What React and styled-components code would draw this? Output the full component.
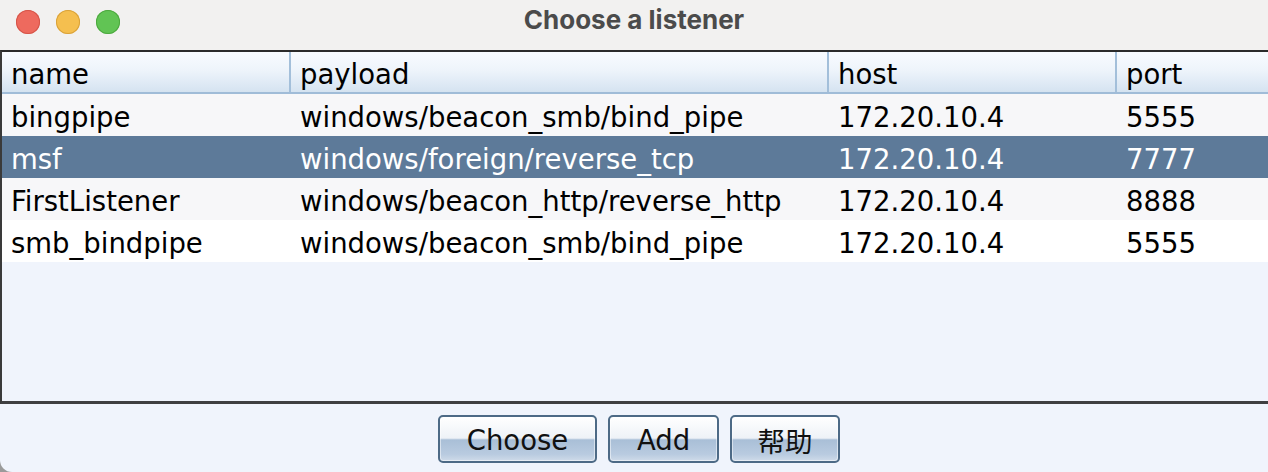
import styled, { createGlobalStyle } from "styled-components";

const Global = createGlobalStyle`
  html, body {
    margin: 0;
    padding: 0;
    background: #9a9a9a;
  }
`

const Window = styled.div`
  width: 1268px;
  height: 472px;
  background: #f0f4fc;
  border-bottom-left-radius: 12px;
  overflow: hidden;
  display: flex;
  flex-direction: column;
  font-family: "DejaVu Sans", "Noto Sans CJK SC", sans-serif;
`
const TitleBar = styled.div`
  height: 50px;
  flex: none;
  background: #f2f1f0;
  display: flex;
  align-items: center;
  position: relative;
`
const Lights = styled.div`
  display: flex;
  gap: 16px;
  padding-left: 16px;
  margin-top: -6px;
`
const Light = styled.span`
  width: 24px;
  height: 24px;
  border-radius: 50%;
  background: ${p => p.$c};
  box-shadow: inset 0 0 0 1px ${p => p.$b};
`
const Title = styled.div`
  position: absolute;
  left: 0;
  right: 0;
  top: 4px;
  text-align: center;
  font-family: Inter, "Liberation Sans", sans-serif;
  font-weight: 700;
  font-size: 26px;
  color: #4b4b4b;
  pointer-events: none;
`
const TablePanel = styled.div`
  height: 349px;
  flex: none;
  border-top: 2px solid #2b2b2b;
  border-left: 2px solid #3a3a3a;
  border-bottom: 3px solid #3f3f41;
  background: #f0f4fc;
  display: flex;
  flex-direction: column;
`
const Row = styled.div`
  display: grid;
  grid-template-columns: 289px 538px 288px 1fr;
  height: ${p => (p.$head ? "40px" : "42px")};
  background: ${p => p.$bg};
  color: ${p => (p.$sel ? "#ffffff" : "#000000")};
  border-bottom: ${p => (p.$head ? "2px solid #a0bcd8" : "none")};
  ${p => p.$head && `background: linear-gradient(#f8fbff, #eef4fb 45%, #d5e3f1);`}
`
const Cell = styled.div`
  display: flex;
  align-items: center;
  padding-left: 9px;
  font-size: 27.5px;
  white-space: nowrap;
  overflow: hidden;
  border-right: ${p => (p.$head && !p.$last ? "2px solid #a3bfda" : "none")};
  padding-top: ${p => (p.$head ? "4px" : "4px")};
`
const Footer = styled.div`
  flex: 1;
  display: flex;
  justify-content: center;
  align-items: flex-start;
  gap: 11px;
  padding-top: 11px;
  padding-left: 10px;
`
const Button = styled.button`
  width: ${p => p.$w}px;
  height: 48px;
  border: 2px solid #4d6a86;
  border-radius: 5px;
  background: linear-gradient(#ffffff 0%, #eef2f7 48%, #a9bfd7 52%, #b9cbe0 85%, #cfdbe9 100%);
  box-shadow: inset 0 0 0 1px rgba(255,255,255,0.5);
  font-family: "DejaVu Sans", "Noto Sans CJK SC", sans-serif;
  font-size: 27.5px;
  color: #111;
  padding: 2px 0 0;
  display: flex;
  align-items: center;
  justify-content: center;
`

const head = ["name", "payload", "host", "port"]
const rows = [
  { c: ["bingpipe", "windows/beacon_smb/bind_pipe", "172.20.10.4", "5555"], bg: "#f7f7f9" },
  { c: ["msf", "windows/foreign/reverse_tcp", "172.20.10.4", "7777"], bg: "#5d7a99", sel: true },
  { c: ["FirstListener", "windows/beacon_http/reverse_http", "172.20.10.4", "8888"], bg: "#f7f7f9" },
  { c: ["smb_bindpipe", "windows/beacon_smb/bind_pipe", "172.20.10.4", "5555"], bg: "#ffffff" },
]

const App = () => {
  return (
    <Window>
      <Global/>
      <TitleBar>
        <Lights>
          <Light $c="#ee6a5e" $b="#d55549"/>
          <Light $c="#f5bf4f" $b="#d9a23a"/>
          <Light $c="#61c454" $b="#4da83f"/>
        </Lights>
        <Title>Choose a listener</Title>
      </TitleBar>
      <TablePanel>
        <Row $head>
          {head.map((h, i) => <Cell key={h} $head $last={i === 3}>{h}</Cell>)}
        </Row>
        {rows.map((r, i) => (
          <Row key={i} $bg={r.bg} $sel={r.sel}>
            {r.c.map((t, j) => <Cell key={j}>{t}</Cell>)}
          </Row>
        ))}
      </TablePanel>
      <Footer>
        <Button $w={159}>Choose</Button>
        <Button $w={111}>Add</Button>
        <Button $w={110}>帮助</Button>
      </Footer>
    </Window>
  )
}
export default App;
